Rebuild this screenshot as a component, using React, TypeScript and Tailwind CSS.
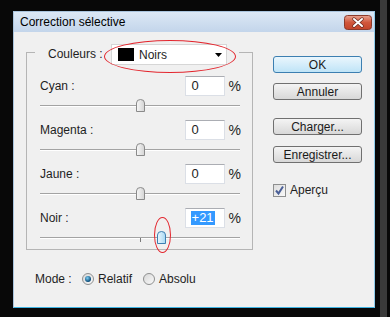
import React from 'react';

const rows = [
  { label: 'Cyan :', value: '0', pos: 100, active: false },
  { label: 'Magenta :', value: '0', pos: 100, active: false },
  { label: 'Jaune :', value: '0', pos: 100, active: false },
  { label: 'Noir :', value: '+21', pos: 121, active: true },
];

const Thumb: React.FC<{ active?: boolean }> = ({ active }) => (
  <svg width="9" height="13" viewBox="0 0 9 13" className="block">
    <defs>
      <linearGradient id={active ? 'tb' : 'tg'} x1="0" y1="0" x2="1" y2="0">
        <stop offset="0" stopColor={active ? '#eaf6fd' : '#f7f7f7'} />
        <stop offset="1" stopColor={active ? '#a7d8f2' : '#d4d4d4'} />
      </linearGradient>
    </defs>
    <path
      d="M0.5 4 Q0.5 0.5 4.5 0.5 Q8.5 0.5 8.5 4 V12.5 H0.5 Z"
      fill={`url(#${active ? 'tb' : 'tg'})`}
      stroke={active ? '#3c7fb1' : '#8a8a8a'}
    />
  </svg>
);

const Button: React.FC<{ label: string; primary?: boolean; className?: string }> = ({ label, primary, className }) => (
  <div
    className={`w-[89px] h-[17px] flex items-center justify-center rounded-[3px] border text-[12px] text-[#1a1a1a] ${
      primary
        ? 'border-[#3c7fb1] bg-gradient-to-b from-[#eaf6fd] to-[#bfe4f7]'
        : 'border-[#707070] bg-gradient-to-b from-[#f4f4f4] to-[#d8d8d8]'
    } ${className ?? ''}`}
  >
    {label}
  </div>
);

const Radio: React.FC<{ checked?: boolean }> = ({ checked }) => (
  <svg width="12" height="12" viewBox="0 0 12 12" className="shrink-0">
    <defs>
      <radialGradient id="rb" cx="0.4" cy="0.35" r="0.6">
        <stop offset="0" stopColor="#7fd0f5" />
        <stop offset="1" stopColor="#0b4c7a" />
      </radialGradient>
      <linearGradient id="rg" x1="0" y1="0" x2="1" y2="1">
        <stop offset="0" stopColor="#d6d6d6" />
        <stop offset="1" stopColor="#fbfbfb" />
      </linearGradient>
    </defs>
    <circle cx="6" cy="6" r="5.5" fill="url(#rg)" stroke="#8e8f8f" />
    {checked && <circle cx="6" cy="6" r="3" fill="url(#rb)" />}
  </svg>
);

export default function App() {
  return (
    <div className="w-[390px] h-[317px] bg-[#080808] flex overflow-hidden font-['Liberation_Sans',Arial,sans-serif]">
      <div className="w-[13px] shrink-0" />

      {/* dialog window */}
      <div className="mt-[11px] w-[362px] h-[297px] shrink-0 flex flex-col border border-[#a9c4dd] border-b-[#3fb4e3] border-r-[#8fcbea] bg-[#f0f0f0]">
        {/* title bar */}
        <div className="h-[20px] shrink-0 flex items-start justify-between bg-gradient-to-b from-[#dce8f5] to-[#c3d5eb]">
          <span className="pl-[6px] pt-[3px] text-[12px] leading-[15px] text-black">Correction sélective</span>
          <div className="mt-[3px] mr-[2px]">
            <svg width="28" height="15" viewBox="0 0 28 15" className="block">
              <defs>
                <linearGradient id="cl" x1="0" y1="0" x2="0" y2="1">
                  <stop offset="0" stopColor="#e8a493" />
                  <stop offset="0.5" stopColor="#d1573c" />
                  <stop offset="1" stopColor="#c3442a" />
                </linearGradient>
              </defs>
              <rect x="0.5" y="0.5" width="27" height="14" rx="3" fill="url(#cl)" stroke="#8a3b2c" />
              <path d="M10 4 L18 11 M18 4 L10 11" stroke="#6b2a20" strokeWidth="3.5" strokeLinecap="round" />
              <path d="M10 4 L18 11 M18 4 L10 11" stroke="#ffffff" strokeWidth="2" strokeLinecap="round" />
            </svg>
          </div>
        </div>

        {/* body */}
        <div className="flex-1 flex text-[12px] text-[#1e1e1e]">
          {/* left column */}
          <div className="relative pl-[12px] pt-[12px] flex flex-col">
            <fieldset className="w-[227px] h-[206px] border border-[#b5b5b5]">
              <legend className="ml-[8px] pl-[13px] pr-[12px]">
                <div className="h-[16px] flex items-start">
                  <span className="w-[63px] h-[21px] leading-[21px]">Couleurs :</span>
                  <div className="w-[116px] h-[21px] shrink-0 flex items-center bg-white border border-[#d6d6d6]">
                    <div className="ml-[6px] w-[16px] h-[13px] bg-black" />
                    <span className="ml-[5px] flex-1">Noirs</span>
                    <svg width="7" height="4" viewBox="0 0 7 4" className="mr-[4px]">
                      <path d="M0 0 H7 L3.5 4 Z" fill="#000" />
                    </svg>
                  </div>
                </div>
              </legend>

              <div className="pt-[16px] flex flex-col">
                {rows.map((r, i) => (
                  <div key={r.label} className={i < rows.length - 1 ? 'mb-[2px]' : ''}>
                    <div className="h-[20px] flex items-center pl-[13px] pr-[11px]">
                      <span className="flex-1">{r.label}</span>
                      <div className="w-[40px] h-[20px] flex items-center bg-white border border-[#dbdfe6] border-t-[#abadb3]">
                        {r.active ? (
                          <span className="ml-[5px] px-[1px] bg-[#3399ff] text-white leading-[14px] text-[13px]">{r.value}</span>
                        ) : (
                          <span className="ml-[6px] text-[13px]">{r.value}</span>
                        )}
                      </div>
                      <span className="ml-[4px] text-[14px]">%</span>
                    </div>
                    <div className="relative h-[22px] pt-[9px] ml-[13px] w-[200px]">
                      <div className="h-px bg-[#a3a3a3]" />
                      <div className="h-px bg-white" />
                      {r.active && <div className="absolute left-[100px] top-[10px] w-px h-[4px] bg-[#7a7a7a]" />}
                      <div className="absolute top-[3px]" style={{ left: r.pos - 4 }}>
                        <Thumb active={r.active} />
                      </div>
                    </div>
                  </div>
                ))}
              </div>
            </fieldset>

            <div className="mt-[21px] ml-[9px] h-[16px] flex items-center">
              <span className="w-[47px]">Mode :</span>
              <Radio checked />
              <span className="ml-[4px] w-[45px]">Relatif</span>
              <Radio />
              <span className="ml-[4px]">Absolu</span>
            </div>

            {/* red annotation ellipses */}
            <div className="absolute left-[90px] top-[8px] w-[132px] h-[33px] rounded-[50%] border-[1.5px] border-[#e3262e]" />
            <div className="absolute left-[140px] top-[185px] w-[17px] h-[36px] rounded-[50%] border-[1.5px] border-[#e3262e]" />
          </div>

          {/* right column */}
          <div className="ml-[20px] pt-[24px] flex flex-col">
            <Button label="OK" primary />
            <Button label="Annuler" className="mt-[10px]" />
            <Button label="Charger..." className="mt-[18px]" />
            <Button label="Enregistrer..." className="mt-[11px]" />
            <div className="mt-[18px] flex items-center">
              <svg width="13" height="13" viewBox="0 0 13 13">
                <defs>
                  <linearGradient id="cb" x1="0" y1="0" x2="1" y2="1">
                    <stop offset="0" stopColor="#dcdcdc" />
                    <stop offset="1" stopColor="#fafafa" />
                  </linearGradient>
                </defs>
                <rect x="0.5" y="0.5" width="12" height="12" fill="url(#cb)" stroke="#8e8f8f" />
                <path d="M3 6.5 L5.5 9.5 L10 2.5" fill="none" stroke="#4a5f97" strokeWidth="2" />
              </svg>
              <span className="ml-[4px]">Aperçu</span>
            </div>
          </div>
        </div>
      </div>

      <div className="w-[5px] shrink-0" />
      <div className="w-[7px] shrink-0 bg-[#3a3a3a]" />
    </div>
  );
}
